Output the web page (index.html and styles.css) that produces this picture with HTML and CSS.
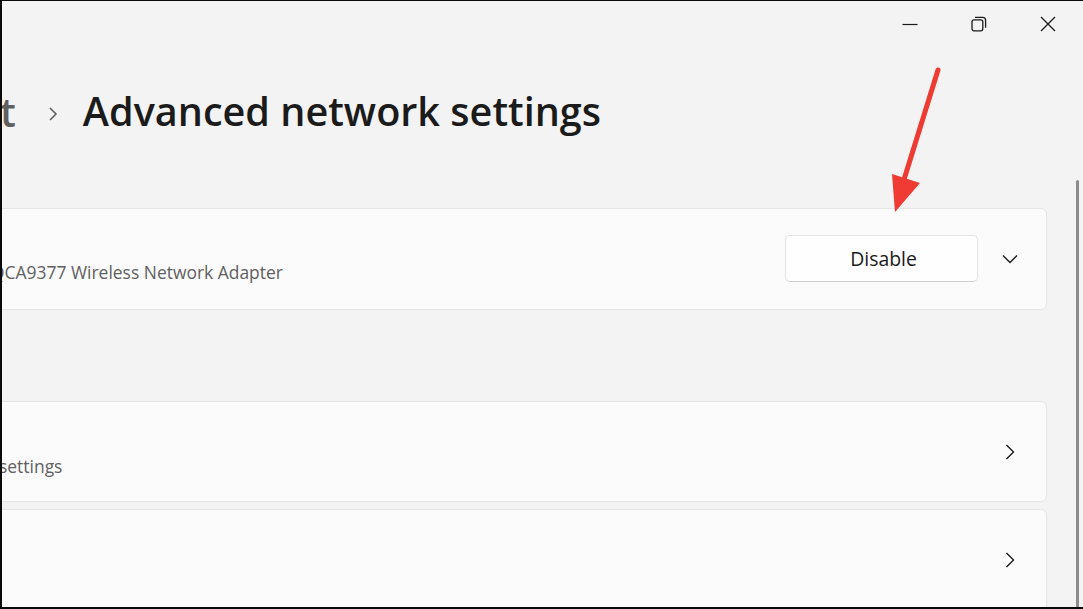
FILE: index.html
```html
<!DOCTYPE html>
<html lang="en">
<head>
<meta charset="utf-8">
<title>Advanced network settings</title>
<link rel="stylesheet" href="styles.css">
</head>
<body>
<div class="frame">
  <div class="titlebar">
    <div class="tb-btn">
      <svg width="16" height="16" viewBox="0 0 16 16"><path d="M0.5 8.5H15.5" stroke="#1b1b1b" stroke-width="1.2" fill="none"/></svg>
    </div>
    <div class="tb-btn">
      <svg width="16" height="16" viewBox="0 0 16 16" fill="none" stroke="#1b1b1b" stroke-width="1.3"><rect x="1" y="3.8" width="10.8" height="11" rx="2"/><path d="M4 1.3H11.6A3 3 0 0 1 14.6 4.3V11.8"/></svg>
    </div>
    <div class="tb-btn">
      <svg width="16" height="16" viewBox="0 0 16 16" fill="none" stroke="#1b1b1b" stroke-width="1.3"><path d="M1 1L15 15M15 1L1 15"/></svg>
    </div>
  </div>
  <div class="body-row">
    <div class="content">
      <div class="breadcrumb">
        <span class="crumb-prev">t</span>
        <svg class="crumb-sep" width="10" height="16" viewBox="0 0 10 16" fill="none" stroke="#5c5c5c" stroke-width="1.5"><path d="M2 2L8 8L2 14"/></svg>
        <h1 class="page-title">Advanced network settings</h1>
      </div>
      <div class="card card-adapter">
        <div class="card-text">
          <div class="card-sub">QCA9377 Wireless Network Adapter</div>
        </div>
        <div class="card-actions">
          <button class="btn">Disable</button>
          <svg class="chev" width="18" height="18" viewBox="0 0 18 18" fill="none" stroke="#1b1b1b" stroke-width="1.4"><path d="M2 5.5L9 12.5L16 5.5"/></svg>
        </div>
      </div>
      <div class="card card-link card-second">
        <div class="card-text">
          <div class="card-sub sub-settings">settings</div>
        </div>
        <svg class="chev" width="18" height="18" viewBox="0 0 18 18" fill="none" stroke="#1b1b1b" stroke-width="1.4"><path d="M5.5 2L12.5 9L5.5 16"/></svg>
      </div>
      <div class="card card-link card-third">
        <div class="card-text"></div>
        <svg class="chev" width="18" height="18" viewBox="0 0 18 18" fill="none" stroke="#1b1b1b" stroke-width="1.4"><path d="M5.5 2L12.5 9L5.5 16"/></svg>
      </div>
    </div>
    <div class="scroll-track"><div class="scroll-thumb"></div></div>
  </div>
  <svg class="arrow" width="80" height="160" viewBox="0 0 80 160">
    <path d="M58 10L22 126" stroke="#ef3b33" stroke-width="5" stroke-linecap="round" fill="none"/>
    <polygon points="12,114 40,123 15,152" fill="#ef3b33"/>
  </svg>
</div>
</body>
</html>
```
FILE: styles.css
```css
* { box-sizing: border-box; }
html, body { margin: 0; padding: 0; }
body {
  width: 1083px;
  height: 609px;
  overflow: hidden;
  background: #000;
  font-family: "Open Sans", "Noto Sans", sans-serif;
}
.frame {
  position: relative;
  width: 1083px;
  height: 609px;
  border-left: 2px solid #0a0a0a;
  border-top: 1px solid #0a0a0a;
  border-bottom: 2px solid #0a0a0a;
  background: #f3f3f3;
  display: flex;
  flex-direction: column;
  overflow: hidden;
}
.titlebar {
  height: 46px;
  display: flex;
  justify-content: flex-end;
  align-items: center;
  padding-right: 1px;
  flex: none;
}
.tb-btn {
  width: 69px;
  height: 46px;
  display: flex;
  align-items: center;
  justify-content: center;
}
.body-row {
  flex: 1;
  display: flex;
  min-height: 0;
}
.content {
  flex: 1;
  min-width: 0;
  padding-right: 29px;
}
.breadcrumb {
  display: flex;
  align-items: center;
  height: 60px;
  margin-top: 37px;
  margin-left: -2px;
}
.crumb-prev {
  font-size: 40px;
  font-weight: 600;
  color: #5f5f5f;
  line-height: 1;
  margin-top: -4px;
}
.crumb-sep {
  margin-left: 32px;
  margin-right: 25px;
}
.page-title {
  margin: 0;
  font-size: 39.6px;
  font-weight: 600;
  color: #1b1b1b;
  line-height: 1;
  margin-top: -4px;
}
.card {
  background: #fbfbfb;
  border: 1px solid #e5e5e5;
  border-radius: 6px;
  margin-left: -80px;
  display: flex;
  align-items: center;
  justify-content: space-between;
}
.card-adapter {
  height: 102px;
  margin-top: 64px;
  padding-right: 27px;
}
.card-text {
  padding-left: 68px;
  padding-top: 26px;
}
.card-sub {
  font-size: 17.45px;
  color: #5f5f5f;
  white-space: nowrap;
}
.card-actions {
  display: flex;
  align-items: center;
  gap: 23px;
}
.btn {
  width: 193px;
  height: 47px;
  margin-top: -2px;
  background: #fefefe;
  border: 1px solid #e3e3e3;
  border-bottom-color: #cdcdcd;
  border-radius: 5px;
  font-family: inherit;
  font-size: 19.4px;
  color: #1b1b1b;
  padding: 0 0 0 4px;
}
.chev { display: block; }
.card-link {
  padding-right: 27px;
}
.card-second {
  height: 101px;
  margin-top: 91px;
}
.card-second .card-text {
  padding-left: 76px;
  padding-top: 28px;
}
.card-third {
  height: 110px;
  margin-top: 7px;
  align-items: flex-start;
}
.card-third .chev { margin-top: 41px; }
.scroll-track {
  width: 7px;
  flex: none;
  display: flex;
  justify-content: flex-start;
}
.scroll-thumb {
  width: 3px;
  margin-top: 133px;
  background: #8c8c8c;
  border-radius: 2px 2px 0 0;
  height: 100%;
}
.arrow {
  position: absolute;
  left: 878px;
  top: 59px;
}
```
